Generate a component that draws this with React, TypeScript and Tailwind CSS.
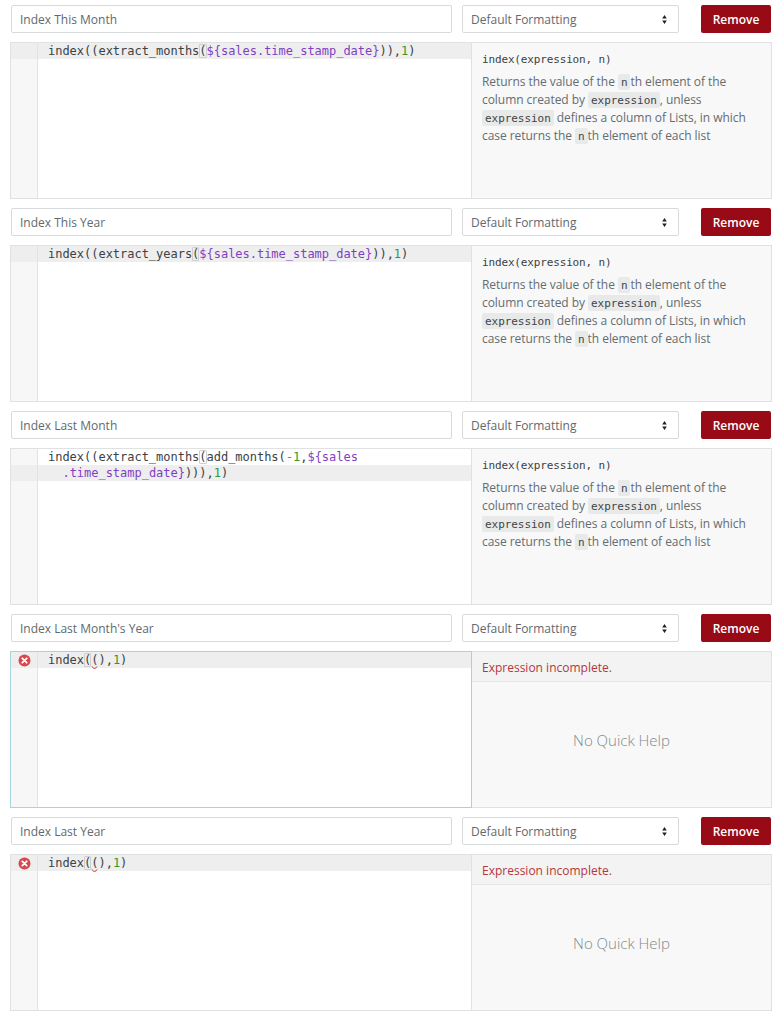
import React from "react";

const mono = "font-['DejaVu_Sans_Mono',monospace]";

const Str = ({ children }: { children: React.ReactNode }) => (
    <span className="text-[#7f3fc4]">{children}</span>
);
const Num = ({ children }: { children: React.ReactNode }) => (
    <span className="text-[#2f9a2f]">{children}</span>
);
// matched bracket box
const Match = ({ children }: { children: React.ReactNode }) => (
    <span className="outline outline-1 -outline-offset-1 outline-[#cfcfcf] rounded-[1px]">{children}</span>
);
const Inline = ({ children }: { children: React.ReactNode }) => (
    <code className={`${mono} relative -top-px bg-[#e8e9e9] rounded-[2px] px-[3px] py-[1.5px] text-[11px] leading-[14px] text-[#3e4548]`}>{children}</code>
);

const QuickHelp = () => (
    <div className="pl-[10px] pr-2 pt-[9px] text-[#646d71]">
        <div className={`${mono} text-[11px] leading-4 text-[#3a4245] h-[16px] tracking-[-0.15px]`}>index(expression, n)</div>
        <p className="mt-[5px] text-[12px] leading-[18px] tracking-[-0.05px]">
            Returns the value of the <Inline>n</Inline>th element of the column created by <Inline>expression</Inline>, unless{" "}
            <Inline>expression</Inline> defines a column of Lists, in which case returns the <Inline>n</Inline>th element of each list
        </p>
    </div>
);

const ErrorHelp = () => (
    <div className="flex flex-col h-full">
        <div className="h-[30px] shrink-0 bg-[#f3f3f3] border-b border-[#e4e6e7] px-[10px] pt-[3px] flex items-center text-[12px] text-[#b5363c]">
            Expression incomplete.
        </div>
        <div className="flex-1 flex items-center justify-center text-[15px] font-light text-[#7f8b90] pb-[9px]">No Quick Help</div>
    </div>
);

const ErrorIcon = () => (
    <svg width="13" height="13" viewBox="0 0 13 13">
        <circle cx="6.5" cy="6.5" r="6" fill="#d8474d" />
        <path d="M4.3 4.3l4.4 4.4M8.7 4.3l-4.4 4.4" stroke="#fff" strokeWidth="1.8" strokeLinecap="round" />
    </svg>
);

const BrokenCode = () => (
    <>
        index<Match>(</Match>
        <span className="relative">
            (
            <svg className="absolute left-0 top-[13px]" width="7" height="4" viewBox="0 0 7 4" fill="none">
                <path d="M1 .5C2 3 5 3 6 .5" stroke="#d5262c" strokeWidth="1" />
            </svg>
        </span>
        ),<Num>1</Num>)
    </>
);

interface RowProps {
    name: string;
    focused?: boolean;
    error?: boolean;
    lines: React.ReactNode[];
    activeLine: number;
}

const Row: React.FC<RowProps> = ({ name, focused, error, lines, activeLine }) => {
    return (
        <div className="mb-[9px]">
            <div className="flex items-center px-[11px] mb-[9px]">
                <div className="w-[441px] h-[28px] border border-[#d8dbdc] rounded-[2px] bg-white px-2 pt-px flex items-center text-[#62696d]">
                    {name}
                </div>
                <div className="ml-[10px] w-[217px] h-[28px] border border-[#d8dbdc] rounded-[2px] bg-white pl-2 pt-px pr-[11px] flex items-center justify-between text-[#62696d]">
                    Default Formatting
                    <svg width="5" height="9" viewBox="0 0 5 9" fill="#222" className="-mt-px">
                        <path d="M2.5 0l2.3 3.4H.2zM2.5 9L.2 5.6h4.6z" />
                    </svg>
                </div>
                <button className="ml-[22px] w-[70px] h-[28px] pt-px bg-[#970a16] rounded-[2px] text-white font-semibold">Remove</button>
            </div>
            <div className="mx-[10px] w-[762px] h-[157px] flex border border-[#dfe1e2]">
                <div
                    className={`relative w-[462px] -my-px -ml-px flex shrink-0 border ${
                        focused ? "border-[#a6d4da]" : "border-[#dfe1e2]"
                    }`}
                >
                    <div className="w-[27px] shrink-0 bg-[#f7f7f7] border-r border-[#e2e4e4]">
                        {lines.map((_, i) => (
                            <div key={i} className={`h-4 flex items-center justify-center ${i === activeLine ? "bg-[#eeeeee]" : ""}`}>
                                {error && <ErrorIcon />}
                            </div>
                        ))}
                    </div>
                    <div className={`flex-1 bg-white ${mono} text-[12px] leading-4 text-[#3a4245] tracking-[-0.02px]`}>
                        {lines.map((line, i) => (
                            <div key={i} className={`h-4 pl-[10px] whitespace-pre ${i === activeLine ? "bg-[#eeeeee]" : ""}`}>
                                {line}
                            </div>
                        ))}
                    </div>
                </div>
                <div className="flex-1 bg-[#f8f8f8] border-l border-[#dfe1e2] -ml-px">{error ? <ErrorHelp /> : <QuickHelp />}</div>
            </div>
        </div>
    );
};

export default function App() {
    return (
        <div className="w-[782px] h-[1019px] overflow-hidden bg-white pt-[5px] text-[12px] font-['Open_Sans',sans-serif]">
            <Row
                name="Index This Month"
                activeLine={0}
                lines={[
                    <>
                        index((extract_months<Match>(</Match>
                        <Str>{"${sales.time_stamp_date}"}</Str>)),<Num>1</Num>)
                    </>,
                ]}
            />
            <Row
                name="Index This Year"
                activeLine={0}
                lines={[
                    <>
                        index((extract_years<Match>(</Match>
                        <Str>{"${sales.time_stamp_date}"}</Str>)),<Num>1</Num>)
                    </>,
                ]}
            />
            <Row
                name="Index Last Month"
                activeLine={1}
                lines={[
                    <>
                        index((extract_months<Match>(</Match>add_months(<span className="text-[#3b8fc4]">-</span>
                        <Num>1</Num>,<Str>{"${sales"}</Str>
                    </>,
                    <>
                        {"  "}
                        <Str>{".time_stamp_date}"}</Str>))),<Num>1</Num>)
                    </>,
                ]}
            />
            <Row name="Index Last Month's Year" focused error activeLine={0} lines={[<BrokenCode />]} />
            <Row name="Index Last Year" error activeLine={0} lines={[<BrokenCode />]} />
        </div>
    );
}
